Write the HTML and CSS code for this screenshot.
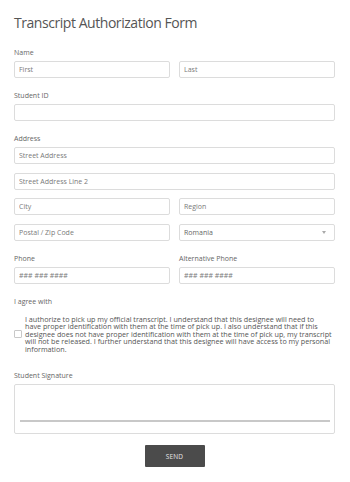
FILE: index.html
```html
<!DOCTYPE html>
<html lang="en">
<head>
  <meta charset="UTF-8">
  <meta name="viewport" content="width=device-width, initial-scale=1.0">
  <title>Transcript Authorization Form</title>
  <link rel="stylesheet" href="styles.css">
</head>
<body>
  <form class="form">
    <h1 class="form-title">Transcript Authorization Form</h1>

    <!-- Name -->
    <div class="field">
      <label class="field-label">Name</label>
      <div class="row">
        <input class="input" type="text" placeholder="First">
        <input class="input" type="text" placeholder="Last">
      </div>
    </div>

    <!-- Student ID -->
    <div class="field">
      <label class="field-label">Student ID</label>
      <input class="input" type="text">
    </div>

    <!-- Address -->
    <div class="field">
      <label class="field-label">Address</label>
      <div class="stack">
        <input class="input" type="text" placeholder="Street Address">
        <input class="input" type="text" placeholder="Street Address Line 2">
        <div class="row">
          <input class="input" type="text" placeholder="City">
          <input class="input" type="text" placeholder="Region">
        </div>
        <div class="row">
          <input class="input" type="text" placeholder="Postal / Zip Code">
          <div class="select">
            <span>Romania</span>
            <span class="select-arrow"></span>
          </div>
        </div>
      </div>
    </div>

    <!-- Phones -->
    <div class="field row">
      <div>
        <label class="field-label">Phone</label>
        <input class="input" type="text" placeholder="### ### ####">
      </div>
      <div>
        <label class="field-label">Alternative Phone</label>
        <input class="input" type="text" placeholder="### ### ####">
      </div>
    </div>

    <!-- Agreement -->
    <div class="field field-agree">
      <label class="field-label">I agree with</label>
      <label class="agree">
        <span class="checkbox"></span>
        <span class="agree-text">I authorize to pick up my official transcript. I understand that this designee will need to<br>have proper identification with them at the time of pick up. I also understand that if this designee does not have proper identification with them at the time of pick up, my transcript will not be released. I further understand that this designee will have access to my personal information.</span>
      </label>
    </div>

    <!-- Signature -->
    <div class="field">
      <label class="field-label">Student Signature</label>
      <div class="signature">
        <div class="signature-line"></div>
      </div>
    </div>

    <div class="actions">
      <button type="button" class="send">SEND</button>
    </div>
  </form>
</body>
</html>
```

FILE: styles.css
```css
body {
  margin: 0;
  background: #ffffff;
  font-family: 'Open Sans', 'Noto Sans', sans-serif;
  color: #555555;
}
.form {
  padding: 13px 15px 0 14px;
}
.form-title {
  margin: 0 0 15px;
  font-size: 14px;
  font-weight: 400;
  line-height: 20px;
  letter-spacing: -0.45px;
  color: #555555;
}
.field {
  margin-bottom: 13px;
}
.field-agree {
  margin-bottom: 18px;
}
.field-label {
  display: block;
  font-size: 7px;
  line-height: 10px;
  margin-bottom: 3px;
  color: #666666;
}
.row {
  display: grid;
  grid-template-columns: 1fr 1fr;
  column-gap: 9px;
}
.stack {
  display: flex;
  flex-direction: column;
  gap: 8.5px;
}
.input, .select {
  display: block;
  box-sizing: border-box;
  width: 100%;
  height: 17px;
  margin: 0;
  padding: 0 4px;
  border: 1px solid #dcdcdc;
  border-radius: 2px;
  background: #ffffff;
  font-family: inherit;
  font-size: 7px;
  color: #555555;
}
.input::placeholder {
  color: #7a7a7a;
}
.select {
  display: flex;
  align-items: center;
  justify-content: space-between;
  color: #666666;
}
.select-arrow {
  width: 0;
  height: 0;
  margin-right: 4px;
  border-left: 2.5px solid transparent;
  border-right: 2.5px solid transparent;
  border-top: 3px solid #aaaaaa;
}
.agree {
  display: flex;
  align-items: center;
  gap: 3px;
  margin-top: 9px;
}
.checkbox {
  flex: none;
  box-sizing: border-box;
  width: 8px;
  height: 8px;
  border: 1px solid #c8c8c8;
  border-radius: 1px;
}
.agree-text {
  font-size: 7.2px;
  line-height: 7.5px;
  color: #555555;
}
.signature {
  box-sizing: border-box;
  height: 50px;
  border: 1px solid #dcdcdc;
  border-radius: 2px;
  padding: 35px 4px 0 5px;
}
.signature-line {
  height: 1.5px;
  background: #c8c8c8;
}
.actions {
  display: flex;
  justify-content: center;
  margin-top: -2px;
}
.send {
  width: 60px;
  height: 22px;
  border: none;
  border-radius: 1px;
  background: #4b4b4b;
  color: #e6e6e6;
  font-family: inherit;
  font-size: 6.5px;
  letter-spacing: 0.2px;
}
```
